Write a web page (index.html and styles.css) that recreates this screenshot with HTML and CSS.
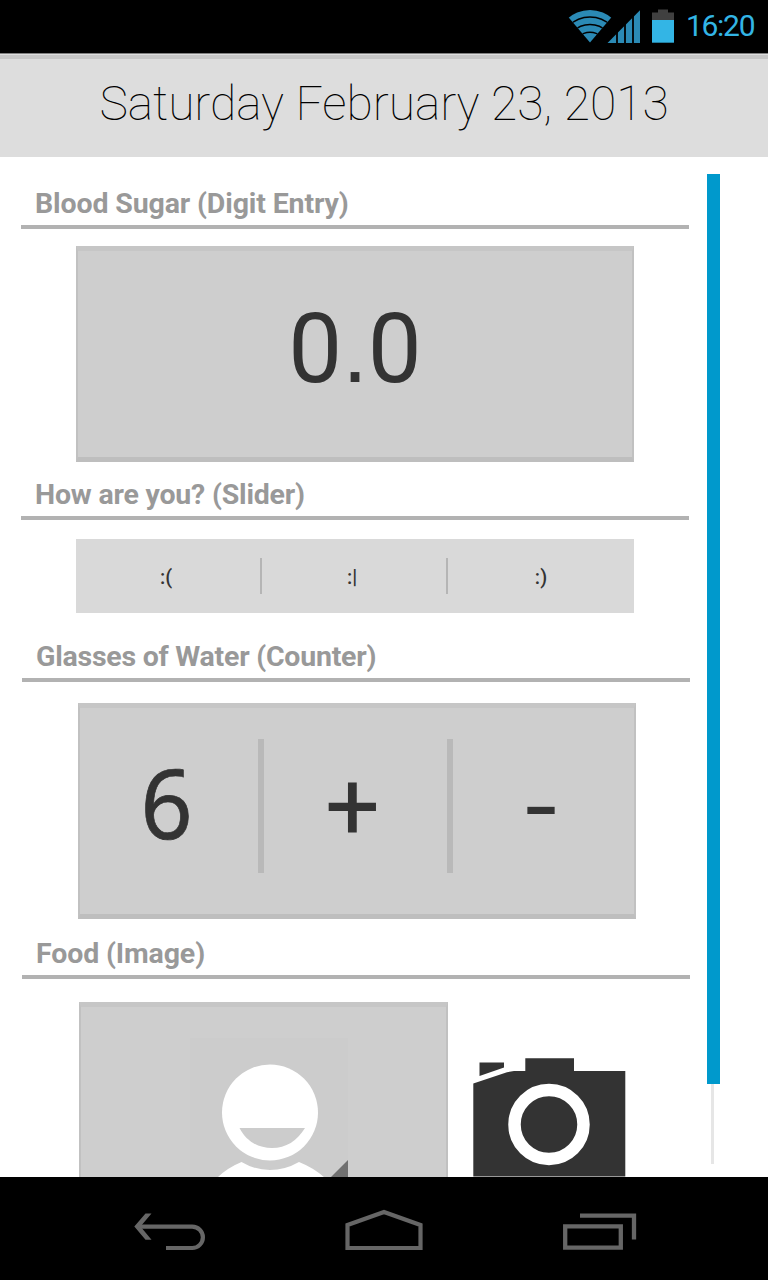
FILE: index.html
```
<!DOCTYPE html>
<html lang="en">
<head>
<meta charset="utf-8">
<title>Daily log</title>
<link rel="stylesheet" href="styles.css">
</head>
<body>
<div class="phone">
  <div class="status">
    <svg class="status-icons" width="110" height="36" viewBox="0 0 110 36">
      <defs><clipPath id="fan"><path d="M22 34.500L0.700 9.500V0H43.300V9.500Z"/></clipPath></defs>
      <g clip-path="url(#fan)">
        <circle cx="22" cy="35.500" r="33.500" fill="#2b8ab5"/>
        <g fill="none" stroke="#000" stroke-width="1.500">
          <circle cx="22" cy="39" r="30"/>
          <circle cx="22" cy="41" r="24.400"/>
          <circle cx="22" cy="40.200" r="16"/>
        </g>
      </g>
      <path d="M39.500 35L72 2.200V35Z" fill="#2b8ab5"/>
      <path d="M49 1V36M57 1V36M65 1V36" stroke="#000" stroke-width="1.800"/>
      <path d="M84 12V4.500H90V1.500H100V4.500H106V12Z" fill="#404040"/>
      <path d="M84 12H106V34.700H84Z" fill="#33b5e5"/>
    </svg>
    <span class="clock">16:20</span>
  </div>
  <header class="date"><h1>Saturday February 23, 2013</h1></header>
  <main class="content">
    <div class="form">
      <section class="s1">
        <h2>Blood Sugar (Digit Entry)</h2>
        <div class="card big entry"><div>0<span class="point">.</span>0</div></div>
      </section>
      <section class="s2">
        <h2>How are you? (Slider)</h2>
        <div class="slider"><span class="sad">:(</span><i></i><span class="meh">:|</span><i></i><span class="glad">:)</span></div>
      </section>
      <section class="s3">
        <h2>Glasses of Water (Counter)</h2>
        <div class="card big counter"><span class="count">6</span><i></i><span class="plus">+</span><i></i><span class="minus">-</span></div>
      </section>
      <section class="s4">
        <h2>Food (Image)</h2>
        <div class="food">
          <div class="card photo">
            <svg width="158" height="140" viewBox="0 0 158 140">
              <path d="M0 0H158V140H0Z" fill="#ccc"/>
              <circle cx="80" cy="74.500" r="48" fill="#fff"/>
              <path d="M49.500 90H115C107 103 96 110 82 110S56 103 49.500 90Z" fill="#ccc"/>
              <path d="M27 140Q37 130 51.500 124Q65 132 80 132T109 124Q124 130 135 140Z" fill="#fff"/>
              <path d="M158 122V140H140Z" fill="#707070"/>
            </svg>
          </div>
          <svg class="camera" width="154" height="120" viewBox="0 0 154 120">
            <path d="M6.500 4.500H31V9.500L6.500 18Z" fill="#333"/>
            <path d="M0.300 25.500L34 14.200L41 13H52.300V0.300H101V13H152.300V118.500H0.300Z" fill="#333"/>
            <circle cx="76" cy="66.500" r="34.500" fill="none" stroke="#fff" stroke-width="12.500"/>
          </svg>
        </div>
      </section>
    </div>
    <div class="scroll"><div class="thumb"></div><div class="track"></div></div>
  </main>
  <nav class="nav">
    <svg width="72" height="40" viewBox="0 0 72 40">
      <path d="M4 14.600H58.200A10.700 10.700 0 0 1 58.200 36H32" fill="none" stroke="#666" stroke-width="4.200"/>
      <path d="M0.300 14.600L11.500 1.500H17.500L6.500 14.600L17.500 27.700H11.500Z" fill="#666"/>
    </svg>
    <svg width="78" height="42" viewBox="0 0 78 42" fill="none" stroke="#666" stroke-width="4.200">
      <path d="M2.500 39V16L39 3L75.500 16V39Z"/>
    </svg>
    <svg width="74" height="38" viewBox="0 0 74 38" fill="none" stroke="#666" stroke-width="4.300">
      <path d="M2.200 13.300H57.800V34.700H2.200ZM17 2.600H71V26.500"/>
    </svg>
  </nav>
</div>
</body>
</html>
```
FILE: styles.css
```
* { box-sizing: border-box; margin: 0; padding: 0; }
body { font-family: Roboto, sans-serif; background: #fff; }
svg { display: block; flex: none; }
.phone { width: 768px; height: 1280px; display: flex; flex-direction: column; overflow: hidden; }

.status { height: 53px; flex: none; background: #000; display: flex; justify-content: flex-end; padding: 8px 13px 0 0; }
.status-icons { margin-right: 8px; }
.clock { width: 69px; font-size: 30px; line-height: 36px; color: #33b5e5; white-space: nowrap; letter-spacing: -1.3px; }

.date { height: 104px; flex: none; background: #ddd; border-top: 1px solid #808080; box-shadow: inset 0 1px #ddd, inset 0 5px #c6c6c6; display: flex; justify-content: center; padding-top: 21px; }
.date h1 { font-size: 48px; font-weight: 100; line-height: 58px; color: #000; white-space: nowrap; letter-spacing: -0.05px; }

.content { height: 1020px; flex: none; display: flex; overflow: hidden; }
.form { width: 707px; }
section { padding-left: 21px; }
h2 { width: 668px; height: 41px; padding: 1px 0 6px 14px; border-bottom: 4px solid #b2b2b2; font-size: 28.500px; line-height: 30px; font-weight: 700; color: #999; white-space: nowrap; letter-spacing: -0.13px; }
.s1 { padding-top: 31px; }
.s2 { padding-top: 17px; }
.s3 { padding: 28px 0 0 22px; }
.s4 { padding: 19px 0 0 22px; }
.s3 h2 { letter-spacing: -0.24px; }
.s2 h2 { letter-spacing: -0.2px; }

.card { background: #cecece; border: solid #c1c1c1; border-width: 5px 2px; border-top-color: #c6c6c6; border-bottom-color: #bebebe; display: flex; color: #333; }
.big { width: 558px; height: 216px; font-size: 97px; line-height: 100px; }
.entry { margin: 17px 0 0 55px; padding-bottom: 9px; justify-content: center; align-items: center; font-size: 96px; }
.point { font-family: "Liberation Sans", sans-serif; font-size: 92px; }
.slider { width: 558px; height: 74px; margin: 19px 0 0 55px; padding-top: 1px; background: #d9d9d9; display: grid; grid-template-columns: 184px 2px 184px 2px 186px; align-items: center; justify-items: center; font-size: 20px; color: #333; font-weight: 500; }
.slider i { width: 2px; height: 36px; background: #b5b5b5; margin-bottom: 2px; }
.sad, .meh { padding-right: 4px; }
.counter { margin: 21px 0 0 56px; padding-bottom: 8px; display: grid; grid-template-columns: 178px 6px 183px 6px 181px; align-items: center; justify-items: center; }
.counter i { width: 6px; height: 134px; background: #b9b9b9; margin-bottom: 3px; }
.count { font-family: "Noto Sans", sans-serif; padding: 0 5px 10px 0; font-size: 96px; transform: scaleX(0.95); -webkit-text-stroke: 0.7px #333; }
.plus { padding-right: 6px; }
.minus { transform: scaleX(1.18); padding-right: 5px; }
.food { display: flex; margin-top: 23px; }
.photo { width: 369px; height: 180px; margin-left: 57px; padding: 31px 0 0 109px; }
.camera { margin: 56px 0 0 25px; }

.scroll { padding-top: 17px; width: 13px; display: flex; flex-direction: column; align-items: center; }
.thumb { width: 13px; height: 910px; background: #09c; }
.track { width: 3px; height: 80px; background: #e6e6e6; margin-right: 2px; }

.nav { height: 103px; flex: none; background: #000; display: flex; padding-left: 134px; }
.nav svg:nth-child(1) { margin-top: 35px; }
.nav svg:nth-child(2) { margin: 32px 0 0 139px; }
.nav svg:nth-child(3) { margin: 36px 0 0 140px; }
```
